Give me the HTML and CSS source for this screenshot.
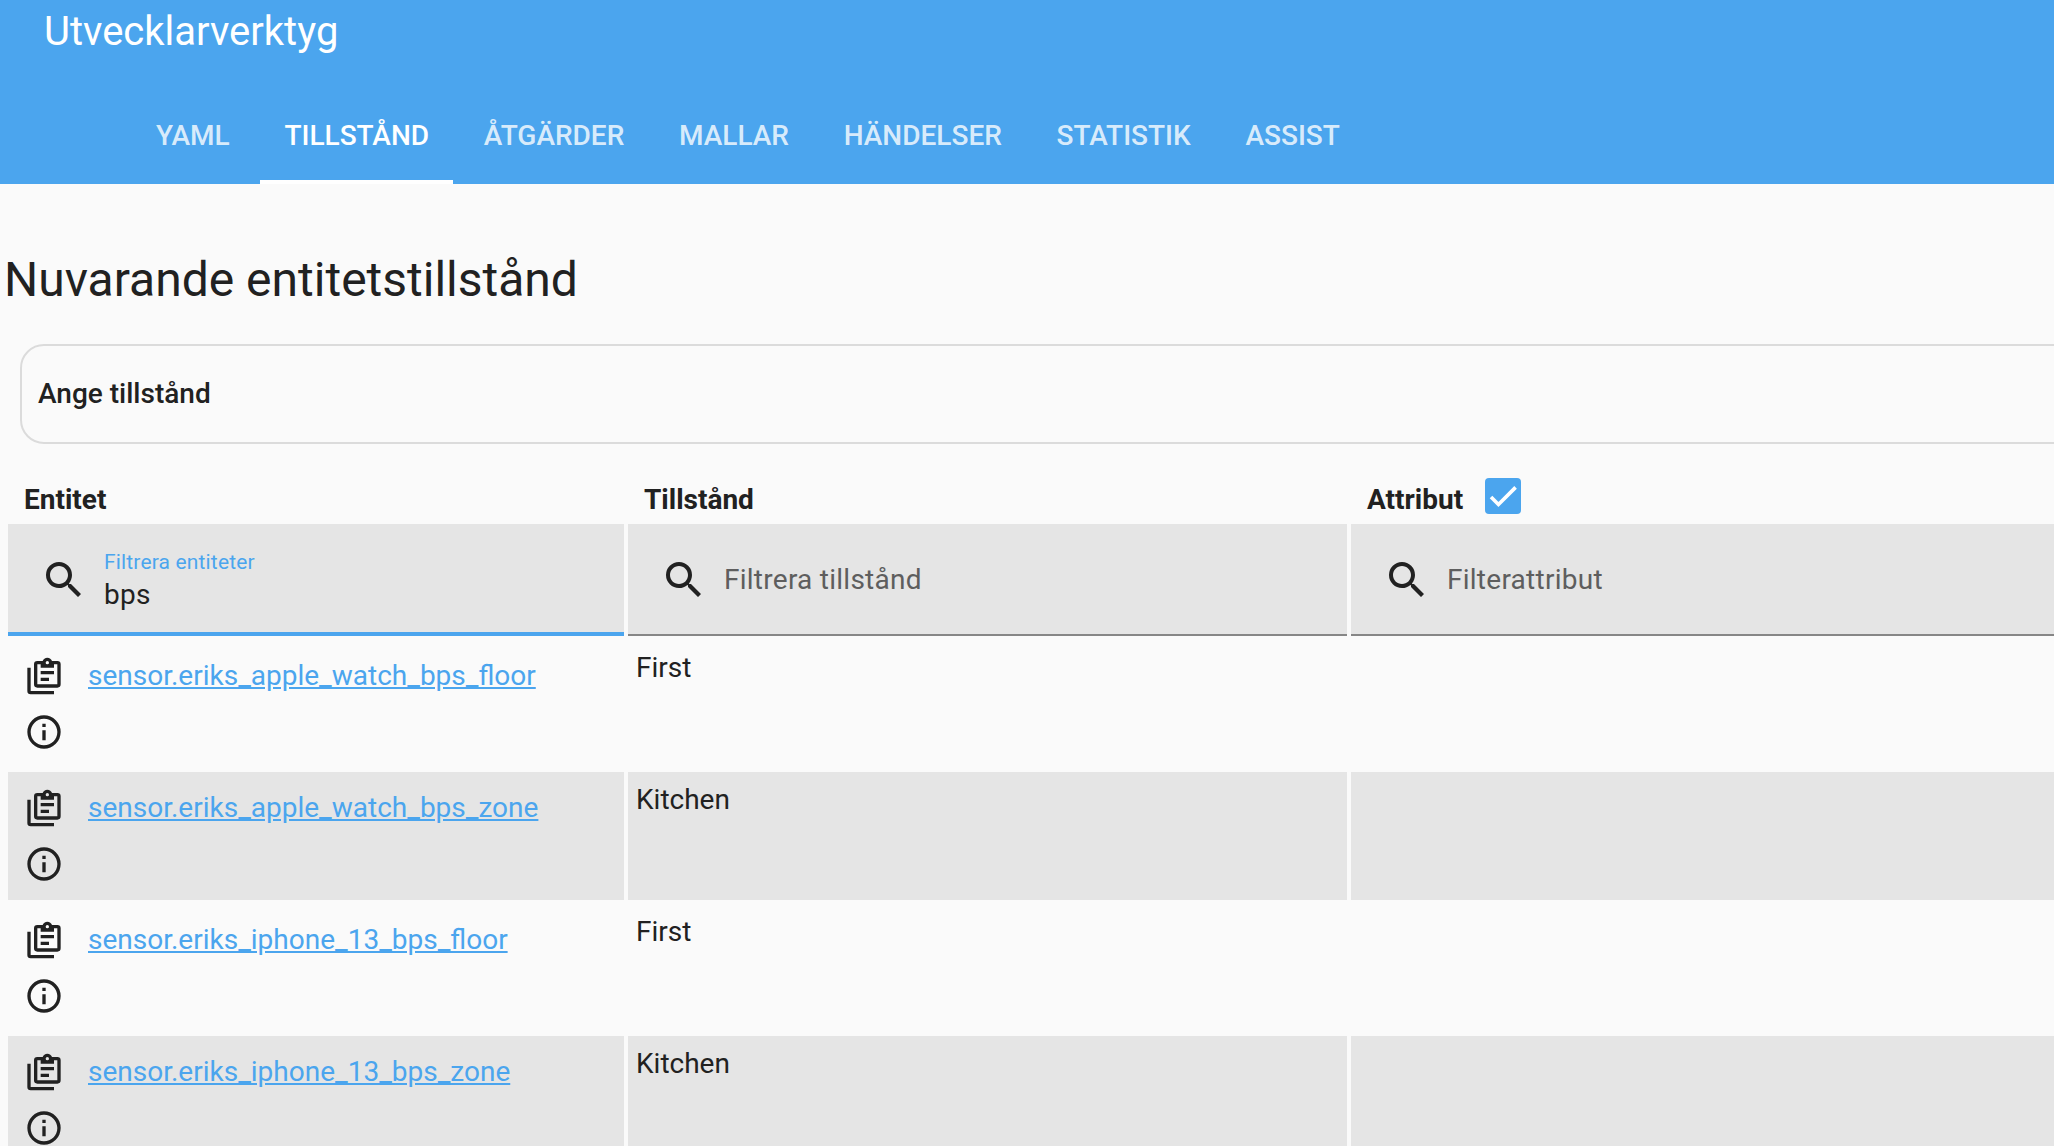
FILE: index.html
```html
<!DOCTYPE html>
<html lang="sv">
<head>
<meta charset="utf-8">
<title>Utvecklarverktyg</title>
<link rel="stylesheet" href="styles.css">
</head>
<body>
<svg class="sprite" aria-hidden="true">
  <symbol id="search" viewBox="0 0 24 24"><path d="M9.5,3A6.5,6.5 0 0,1 16,9.5C16,11.11 15.41,12.59 14.44,13.73L14.71,14H15.5L20.5,19L19,20.5L14,15.5V14.71L13.73,14.44C12.59,15.41 11.11,16 9.5,16A6.5,6.5 0 0,1 3,9.5A6.5,6.5 0 0,1 9.5,3M9.5,5C7,5 5,7 5,9.5C5,12 7,14 9.5,14C12,14 14,12 14,9.5C14,7 12,5 9.5,5Z"/></symbol>
  <symbol id="copy" viewBox="0 0 24 24"><path d="M4,7V21H18V23H4A2,2 0 0,1 2,21V7H4M20,3A2,2 0 0,1 22,5V17A2,2 0 0,1 20,19H8A2,2 0 0,1 6,17V5A2,2 0 0,1 8,3H11.18C11.6,1.84 12.7,1 14,1C15.3,1 16.4,1.84 16.82,3H20M14,3A1,1 0 0,0 13,4A1,1 0 0,0 14,5A1,1 0 0,0 15,4A1,1 0 0,0 14,3M10,7V5H8V17H20V5H18V7M10,7M10,9H18V11H10V9M10,13H15V15H10V13Z"/></symbol>
  <symbol id="info" viewBox="0 0 24 24"><path d="M11,9H13V7H11M12,20C7.59,20 4,16.41 4,12C4,7.59 7.59,4 12,4C16.41,4 20,7.59 20,12C20,16.41 16.41,20 12,20M12,2A10,10 0 0,0 2,12A10,10 0 0,0 12,22A10,10 0 0,0 22,12A10,10 0 0,0 12,2M11,17H13V11H11V17Z"/></symbol>
</svg>
<header class="header">
  <div class="title">Utvecklarverktyg</div>
  <nav class="tabs">
    <a class="tab">YAML</a>
    <a class="tab active">TILLSTÅND</a>
    <a class="tab">ÅTGÄRDER</a>
    <a class="tab">MALLAR</a>
    <a class="tab">HÄNDELSER</a>
    <a class="tab">STATISTIK</a>
    <a class="tab">ASSIST</a>
  </nav>
</header>
<main>
  <h1 class="heading">Nuvarande entitetstillstånd</h1>
  <section class="card">Ange tillstånd</section>
  <div class="table">
    <div class="th">Entitet</div>
    <div class="th">Tillstånd</div>
    <div class="th">Attribut
      <span class="checkbox"><svg viewBox="0 0 24 24"><path d="M1.73,12.91 8.1,19.28 22.79,4.59"/></svg></span>
    </div>

    <div class="filter focused"><svg class="search"><use href="#search"/></svg><div class="field"><span class="label">Filtrera entiteter</span><span class="value">bps</span></div></div>
    <div class="filter"><svg class="search"><use href="#search"/></svg><span class="placeholder">Filtrera tillstånd</span></div>
    <div class="filter"><svg class="search"><use href="#search"/></svg><span class="placeholder">Filterattribut</span></div>

    <div class="row">
      <div class="cell entity"><div class="icons"><svg><use href="#copy"/></svg><svg><use href="#info"/></svg></div><a class="link">sensor.eriks_apple_watch_bps_floor</a></div>
      <div class="cell state">First</div>
      <div class="cell"></div>
    </div>
    <div class="row shaded">
      <div class="cell entity"><div class="icons"><svg><use href="#copy"/></svg><svg><use href="#info"/></svg></div><a class="link">sensor.eriks_apple_watch_bps_zone</a></div>
      <div class="cell state">Kitchen</div>
      <div class="cell"></div>
    </div>
    <div class="row">
      <div class="cell entity"><div class="icons"><svg><use href="#copy"/></svg><svg><use href="#info"/></svg></div><a class="link">sensor.eriks_iphone_13_bps_floor</a></div>
      <div class="cell state">First</div>
      <div class="cell"></div>
    </div>
    <div class="row shaded">
      <div class="cell entity"><div class="icons"><svg><use href="#copy"/></svg><svg><use href="#info"/></svg></div><a class="link">sensor.eriks_iphone_13_bps_zone</a></div>
      <div class="cell state">Kitchen</div>
      <div class="cell"></div>
    </div>
  </div>
</main>
</body>
</html>
```
FILE: styles.css
```css
* { box-sizing: border-box; }
html, body { height: 100%; overflow: hidden; }
body {
  margin: 0;
  background: #fafafa;
  color: #212121;
  font: 400 28px/40px Roboto, "Noto Sans", sans-serif;
}
svg { display: block; fill: currentColor; flex: none; }
.sprite { display: none; }

.header {
  display: flex;
  flex-direction: column;
  justify-content: space-between;
  height: 184px;
  background: #4ba5ee;
  color: #fff;
}
.title { padding: 8px 0 0 44px; font-size: 40px; line-height: 48px; }
.tabs { display: flex; gap: 6.7px; padding-left: 132px; }
.tab {
  height: 96px;
  padding: 28px 24px 0;
  border-bottom: 4px solid transparent;
  font-weight: 500;
  color: rgba(255, 255, 255, .8);
}
.tab.active { color: #fff; border-color: #fff; }

.heading {
  margin: 0;
  padding: 65px 0 0 4px;
  height: 160px;
  font-size: 48px;
  font-weight: 400;
  line-height: 62px;
}
.card {
  height: 100px;
  margin: 0 -40px 0 20px;
  padding: 28px 16px;
  border: 2px solid #dbdbdb;
  border-radius: 24px;
  font-weight: 500;
}

.table {
  display: grid;
  grid-template-columns: 616px 719px 1fr;
  grid-template-rows: 76px 112px;
  column-gap: 4px;
  margin: 4px -40px 0 8px;
}
.th {
  display: flex;
  padding: 32px 16px 0;
  font-weight: 700;
}
.checkbox {
  width: 36px;
  height: 36px;
  margin: -2px 0 0 22px;
  padding: 4px;
  border-radius: 4px;
  background: #4ba5ee;
}
.checkbox svg {
  width: 28px;
  height: 28px;
  fill: none;
  stroke: #fff;
  stroke-width: 3.12;
}

.filter {
  display: flex;
  align-items: center;
  gap: 16px;
  padding-left: 32px;
  background: #e5e5e5;
  box-shadow: inset 0 -2px #868686;
}
.filter.focused { box-shadow: inset 0 -4px #4ba5ee; }
.search { width: 48px; height: 48px; }
.field { display: flex; flex-direction: column; padding-top: 2px; }
.label { color: #4ba5ee; font-size: 21px; line-height: 28px; letter-spacing: .16px; }
.value { line-height: 38px; letter-spacing: .26px; }
.placeholder { color: #5e5e5e; letter-spacing: .26px; }

.row {
  display: grid;
  grid-column: 1 / -1;
  grid-template-columns: subgrid;
  height: 128px;
  margin-top: 4px;
}
.shaded .cell { background: #e5e5e5; }
.entity { display: flex; gap: 24px; padding: 16px; }
.icons { display: flex; flex-direction: column; gap: 16px; }
.icons svg { width: 40px; height: 40px; }
.link {
  height: 40px;
  color: #4ba5ee;
  text-decoration: underline;
}
.state { padding: 8px; }
```
